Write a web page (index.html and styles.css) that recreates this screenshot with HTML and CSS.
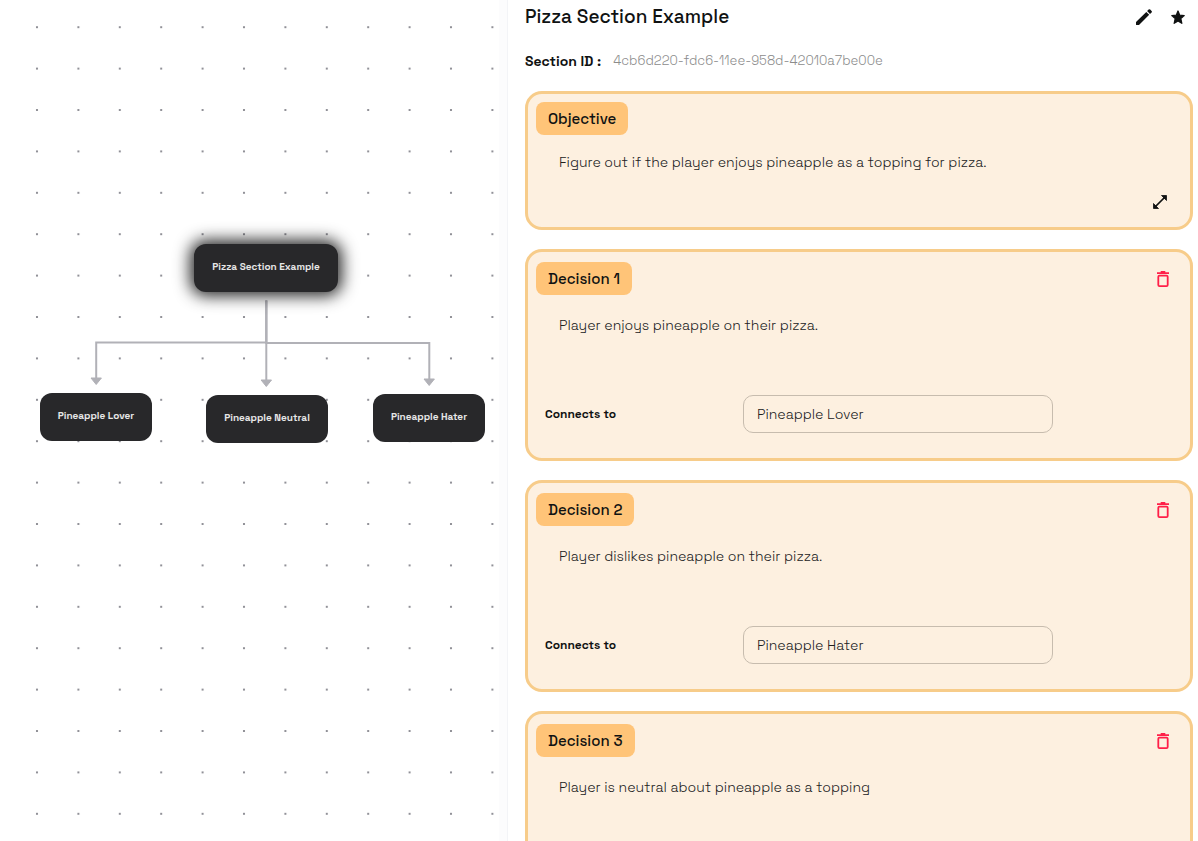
FILE: index.html
```html
<!DOCTYPE html>
<html lang="en">
<head>
<meta charset="utf-8">
<title>Pizza Section Example</title>
<meta name="viewport" content="width=device-width, initial-scale=1">
<link rel="stylesheet" href="styles.css">
</head>
<body>
<svg class="sprite" aria-hidden="true">
  <symbol id="trash" viewBox="0 0 16 18">
    <path d="M2 3.2h12M5.7 1.8h4.6" fill="none" stroke="currentColor" stroke-width="1.7"/>
    <rect x="3.3" y="5.6" width="9.4" height="10.6" rx="1.2" fill="none" stroke="currentColor" stroke-width="1.8"/>
  </symbol>
</svg>
<main class="app">
  <section class="canvas" aria-label="Section graph">
    <svg class="edges" aria-hidden="true">
      <defs>
        <pattern id="dots" x="16.3" y="6.5" width="41.4" height="41.4" patternUnits="userSpaceOnUse">
          <circle cx="20.7" cy="20.7" r="1.1" fill="#77777f"/>
        </pattern>
      </defs>
      <rect width="100%" height="100%" fill="url(#dots)"/>
      <g fill="none" stroke="#b1b1b7" stroke-width="2">
        <path d="M266.300 300.500V342.500H96.200V379"/>
        <path d="M266.300 300.500V380"/>
        <path d="M266.300 300.500V343H429.300V380"/>
      </g>
      <g fill="#b1b1b7" stroke="#b1b1b7" stroke-linejoin="round">
        <path d="M91 378h10.400l-5.200 6.500z"/>
        <path d="M261.100 380h10.400l-5.200 6.500z"/>
        <path d="M424 379h10.400l-5.200 6.500z"/>
      </g>
    </svg>
    <button class="node node-root" type="button">Pizza Section Example</button>
    <button class="node node-lover" type="button">Pineapple Lover</button>
    <button class="node node-neutral" type="button">Pineapple Neutral</button>
    <button class="node node-hater" type="button">Pineapple Hater</button>
  </section>
  <aside class="panel">
    <header class="panel-head">
      <h1 class="title">Pizza Section Example</h1>
      <button class="icon-btn" type="button" aria-label="Edit">
        <svg width="18" height="18" viewBox="0 0 18 18" fill="currentColor"><path d="M1 14 11.300 3.900l2.900 2.900L4 17H1.600Q1 17 1 16.400zM12.100 3.100l1.500-1.500q.8-.8 1.600 0L16.600 2.900q.8.800 0 1.600L15 6z"/></svg>
      </button>
      <button class="icon-btn" type="button" aria-label="Favourite">
        <svg width="18" height="18" viewBox="0 0 18 18" fill="currentColor" stroke="currentColor" stroke-width="1.300" stroke-linejoin="round"><path d="m9 3 1.700 4.200 4.500.4-3.400 3 1 4.700L9 12.900l-3.800 2.400 1-4.700-3.400-3 4.500-.4z"/></svg>
      </button>
    </header>
    <p class="section-id"><strong class="id-label">Section ID :</strong><span class="id-value">4cb6d220-fdc6-11ee-958d-42010a7be00e</span></p>
    <div class="cards">
      <article class="card card-objective">
        <div class="card-head"><h2 class="chip">Objective</h2></div>
        <p class="text">Figure out if the player enjoys pineapple as a topping for pizza.</p>
        <button class="icon-btn expand" type="button" aria-label="Expand">
          <svg width="18" height="18" viewBox="0 0 18 18" fill="currentColor" stroke="currentColor"><path d="M4 14 14 4" stroke-width="1.700"/><path d="M10.500 2.500h5v5zM2.500 10.500v5h5z" stroke-width=".8" stroke-linejoin="round"/></svg>
        </button>
      </article>
      <article class="card">
        <div class="card-head"><h2 class="chip">Decision 1</h2><button class="icon-btn danger" type="button" aria-label="Delete decision 1"><svg width="16" height="18"><use href="#trash"/></svg></button></div>
        <p class="text">Player enjoys pineapple on their pizza.</p>
        <div class="connect"><label for="to1">Connects to</label><input id="to1" type="text" value="Pineapple Lover"></div>
      </article>
      <article class="card">
        <div class="card-head"><h2 class="chip">Decision 2</h2><button class="icon-btn danger" type="button" aria-label="Delete decision 2"><svg width="16" height="18"><use href="#trash"/></svg></button></div>
        <p class="text">Player dislikes pineapple on their pizza.</p>
        <div class="connect"><label for="to2">Connects to</label><input id="to2" type="text" value="Pineapple Hater"></div>
      </article>
      <article class="card">
        <div class="card-head"><h2 class="chip">Decision 3</h2><button class="icon-btn danger" type="button" aria-label="Delete decision 3"><svg width="16" height="18"><use href="#trash"/></svg></button></div>
        <p class="text">Player is neutral about pineapple as a topping</p>
      </article>
    </div>
  </aside>
</main>
</body>
</html>
```
FILE: styles.css
```css
* {
  box-sizing: border-box;
}

body {
  margin: 0;
  overflow: hidden;
  background: #fff;
  color: #101212;
  font-family: "Space Grotesk", Inter, "Liberation Sans", sans-serif;
}

h1, h2, p {
  margin: 0;
}

.sprite {
  position: absolute;
  width: 0;
  height: 0;
}

.app {
  display: grid;
  grid-template-columns: minmax(0, 508fr) minmax(0, 690fr);
  height: 100vh;
}

.canvas {
  position: relative;
  overflow: hidden;
}

.edges {
  display: block;
  width: 100%;
  height: 100%;
}

.node {
  position: absolute;
  height: 48px;
  padding: 0 0 2px;
  border: 0;
  border-radius: 12px;
  background: #28282a;
  color: #e6e6e6;
  font: 700 10px/16px "Space Grotesk", Inter, "Liberation Sans", sans-serif;
  white-space: nowrap;
}

.node-root {
  left: 194px;
  top: 244px;
  width: 144px;
  box-shadow: 0 0 16px 4px #000000d8;
}

.node-lover {
  left: 40px;
  top: 393px;
  width: 112px;
}

.node-neutral {
  left: 206px;
  top: 395px;
  width: 122px;
}

.node-hater {
  left: 373px;
  top: 394px;
  width: 112px;
}

.panel {
  position: relative;
  padding: 5px 5px 0 17px;
  overflow: hidden;
  background: #fff;
  box-shadow: 0 0 1px #c8ccd8, -9px 0 0 #fcfcfd;
}

.panel-head {
  display: flex;
  align-items: center;
  gap: 10px;
  padding-right: 3px;
}

.title {
  flex: 1;
  font-size: 19px;
  font-weight: 500;
  line-height: 24px;
}

.icon-btn {
  display: grid;
  place-items: center;
  width: 24px;
  height: 24px;
  padding: 0;
  border: 0;
  background: none;
  color: #101212;
}

.section-id {
  display: flex;
  gap: 12px;
  margin-top: 20px;
  line-height: 24px;
}

.id-label {
  font-size: 14px;
  font-weight: 600;
}

.id-value {
  color: #8c8c8c;
  font-size: 13px;
  font-weight: 300;
}

.cards {
  display: grid;
  gap: 19px;
  margin-top: 18px;
}

.card {
  min-height: 212px;
  padding: 10px 8px;
  border: 3px solid #f7cc8a;
  border-radius: 17px;
  background: #fdf0e0;
}

.card-objective {
  min-height: 139px;
  padding-top: 8px;
}

.card-head {
  display: flex;
  align-items: center;
  justify-content: space-between;
  padding-right: 7px;
}

.chip {
  padding: 0 12px;
  border-radius: 8px;
  background: #ffc478;
  font-size: 15px;
  font-weight: 500;
  line-height: 33px;
}

.danger {
  color: #ff1f48;
}

.text {
  padding: 18px 23px 0;
  color: #20201c;
  font-size: 14px;
  font-weight: 300;
  line-height: 24px;
}

.card-objective .text {
  padding-top: 15px;
}

.expand {
  margin: 16px 10px 0 auto;
}

.connect {
  display: grid;
  grid-template-columns: 198px minmax(0, 310px);
  align-items: center;
  margin-top: 58px;
  padding-left: 9px;
}

.connect label {
  font-size: 12px;
  font-weight: 600;
}

.connect input {
  width: 100%;
  height: 38px;
  padding: 0 13px;
  border: 1px solid #c7bcae;
  border-radius: 10px;
  background: transparent;
  color: #20201c;
  font: 300 14px/24px "Space Grotesk", Inter, "Liberation Sans", sans-serif;
}
```
